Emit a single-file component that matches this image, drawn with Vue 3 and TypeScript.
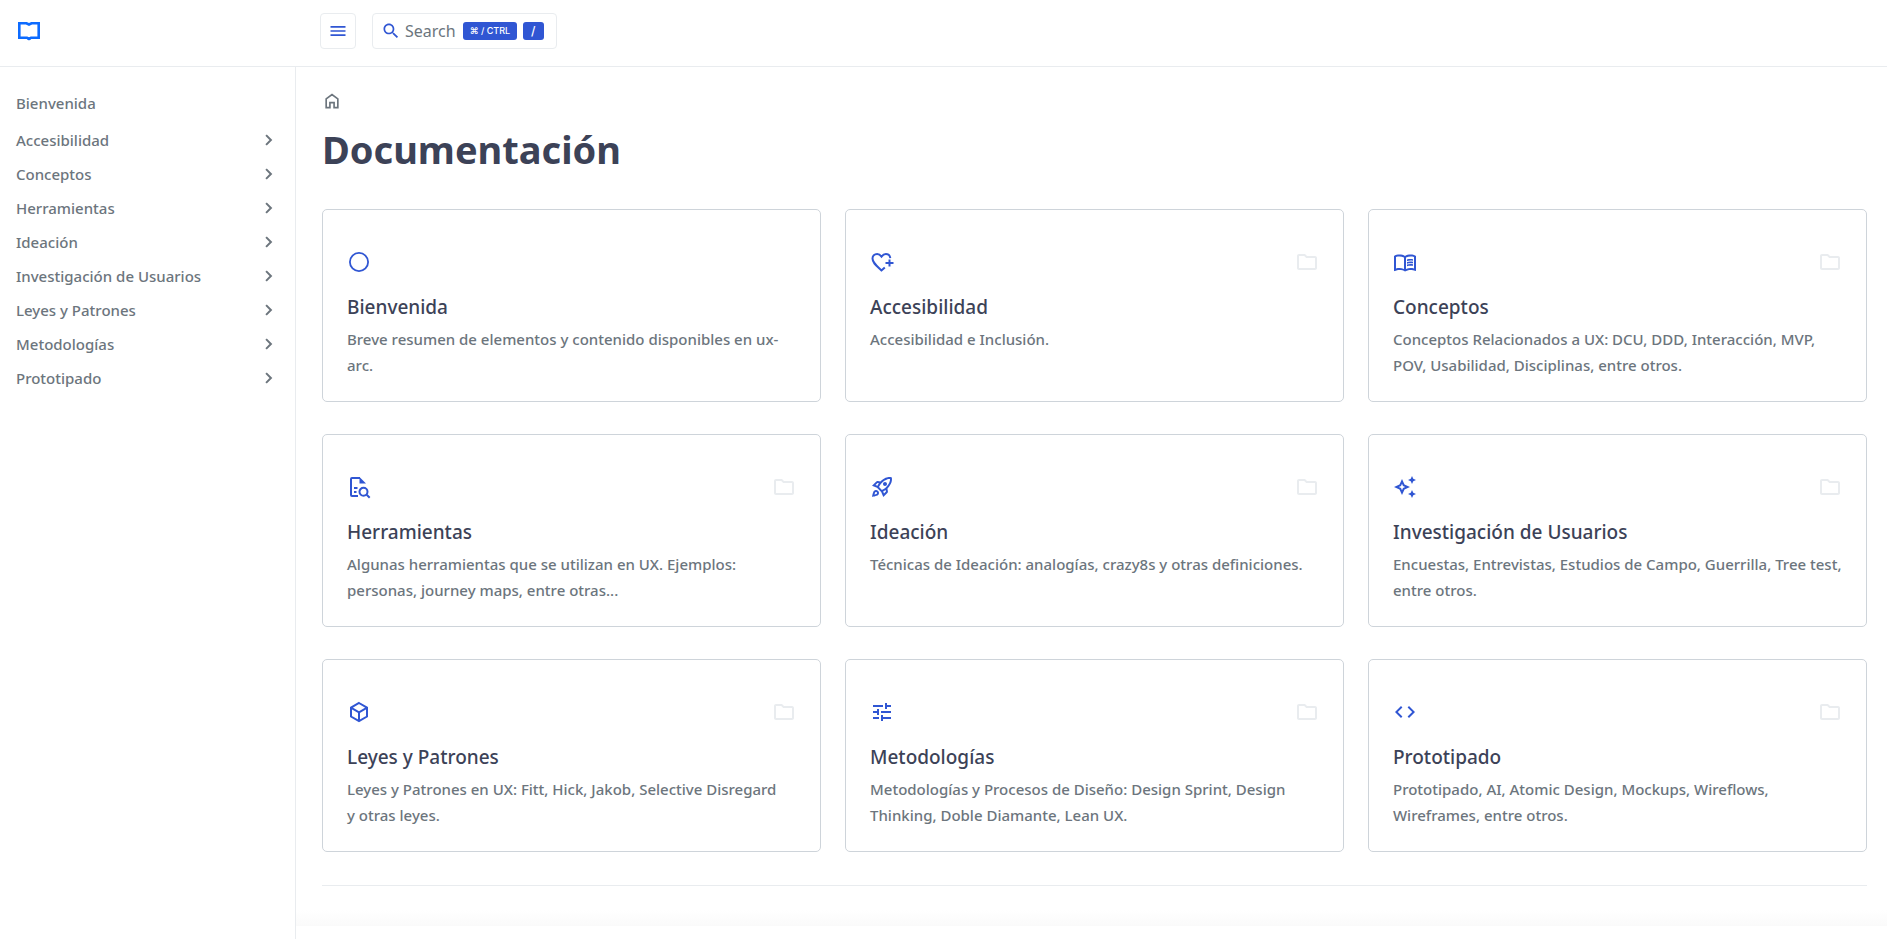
<script setup lang="ts">
import { ref } from 'vue'

interface Section {
  title: string
  text: string
  icon: string
  folder: boolean
}

const sidebarOpen = ref(true)

const sections: Section[] = [
  { title: 'Bienvenida', text: 'Breve resumen de elementos y contenido disponibles en ux-arc.', icon: 'circle', folder: false },
  { title: 'Accesibilidad', text: 'Accesibilidad e Inclusión.', icon: 'heart', folder: true },
  { title: 'Conceptos', text: 'Conceptos Relacionados a UX: DCU, DDD, Interacción, MVP, POV, Usabilidad, Disciplinas, entre otros.', icon: 'book', folder: true },
  { title: 'Herramientas', text: 'Algunas herramientas que se utilizan en UX. Ejemplos: personas, journey maps, entre otras...', icon: 'docSearch', folder: true },
  { title: 'Ideación', text: 'Técnicas de Ideación: analogías, crazy8s y otras definiciones.', icon: 'rocket', folder: true },
  { title: 'Investigación de Usuarios', text: 'Encuestas, Entrevistas, Estudios de Campo, Guerrilla, Tree test, entre otros.', icon: 'sparkle', folder: true },
  { title: 'Leyes y Patrones', text: 'Leyes y Patrones en UX: Fitt, Hick, Jakob, Selective Disregard y\u00a0otras leyes.', icon: 'cube', folder: true },
  { title: 'Metodologías', text: 'Metodologías y Procesos de Diseño: Design Sprint, Design Thinking, Doble Diamante, Lean UX.', icon: 'tune', folder: true },
  { title: 'Prototipado', text: 'Prototipado, AI, Atomic Design, Mockups, Wireflows, Wireframes, entre otros.', icon: 'code', folder: true },
]

const filled: Record<string, string> = {
  circle: 'M12 2a10 10 0 1 0 0 20a10 10 0 0 0 0-20zm0 18.200a8.200 8.200 0 1 1 0-16.400a8.200 8.200 0 0 1 0 16.400z',
  book: 'M21 5c-1.110-.350-2.330-.500-3.500-.500-1.950 0-4.050.400-5.500 1.500-1.450-1.100-3.550-1.500-5.500-1.500S2.450 4.900 1 6v14.650c0 .250.250.500.500.500.100 0 .150-.050.250-.050C3.100 20.450 5.050 20 6.500 20c1.950 0 4.050.400 5.500 1.500 1.350-.850 3.800-1.500 5.500-1.500 1.650 0 3.350.300 4.750 1.050.100.050.150.050.250.050.250 0 .500-.250.500-.500V6c-.600-.450-1.250-.750-2-1zM3 18.500V7c1.100-.350 2.300-.500 3.500-.500 1.340 0 3.130.410 4.500.990v11.500C9.630 18.410 7.840 18 6.500 18c-1.200 0-2.400.150-3.500.500zm18 0c-1.100-.350-2.300-.500-3.500-.500-1.340 0-3.130.410-4.500.990V7.490c1.370-.590 3.160-.990 4.500-.990 1.200 0 2.400.150 3.500.500v11.500zM17.500 10.500c.880 0 1.730.090 2.500.260V9.240c-.790-.150-1.640-.240-2.500-.240-1.280 0-2.460.160-3.500.470v1.570c.990-.350 2.180-.540 3.500-.540zm0 2.660c-1.280 0-2.460.160-3.500.470v-1.570c.990-.360 2.180-.540 3.500-.540.880 0 1.730.090 2.500.260v1.520c-.790-.150-1.640-.140-2.500-.140zm0 2.500c-1.280 0-2.460.160-3.500.470v-1.570c.990-.360 2.180-.540 3.500-.540.880 0 1.730.090 2.500.260v1.520c-.790-.150-1.640-.140-2.500-.140z',
  rocket: 'M6 15c-.83 0-1.58.34-2.120.88C2.700 17.060 2 22 2 22s4.940-.700 6.120-1.880C8.660 19.580 9 18.830 9 18c0-1.660-1.340-3-3-3zm.710 3.710c-.280.280-2.170.760-2.170.760s.470-1.880.760-2.170c.170-.190.420-.300.700-.300.550 0 1 .450 1 1 0 .280-.110.530-.290.710zM17.420 13.650c6.360-6.360 4.240-11.310 4.240-11.310s-4.950-2.120-11.310 4.240l-2.490-.500c-.650-.130-1.330.080-1.810.550L2 10.690l5 2.140L11.170 17l2.140 5 4.050-4.050c.470-.470.680-1.150.550-1.810l-.490-2.490zM7.410 10.830l-1.910-.820 1.970-1.970 1.440.290c-.570.830-1.080 1.700-1.500 2.500zm6.580 7.670l-.820-1.910c.800-.420 1.670-.930 2.490-1.500l.290 1.440-1.960 1.970zM16 12.240c-1.320 1.320-3.380 2.400-4.040 2.730l-2.930-2.930c.320-.650 1.400-2.710 2.730-4.040 4.680-4.680 8.230-3.990 8.230-3.990s.690 3.550-3.990 8.230zM15 11c1.100 0 2-.900 2-2s-.900-2-2-2-2 .900-2 2 .900 2 2 2z',
  sparkle: 'M19 9l1.250-2.750L23 5l-2.750-1.250L19 1l-1.250 2.750L15 5l2.750 1.250L19 9zm0 6l-1.250 2.750L15 19l2.750 1.250L19 23l1.250-2.750L23 19l-2.750-1.250L19 15zm-7.500-5.500L9 4 6.500 9.500 1 12l5.500 2.500L9 20l2.500-5.500L17 12l-5.500-2.500zm-1.510 3.490L9 15.170l-.990-2.180L5.830 12l2.180-.990L9 8.830l.990 2.180 2.180.990-2.180.990z',
  tune: 'M3 17v2h6v-2H3zM3 5v2h10V5H3zm10 16v-2h8v-2h-8v-2h-2v6h2zM7 9v2H3v2h4v2h2V9H7zm14 4v-2H11v2h10zm-6-4h2V7h4V5h-4V3h-2v6z',
  code: 'M9.400 16.600L4.800 12l4.600-4.600L8 6l-6 6 6 6 1.400-1.400zm5.200 0l4.600-4.600-4.600-4.600L16 6l6 6-6 6-1.400-1.400z',
}

const stroked: Record<string, string> = {
  heart: 'M20.300 8.200C20 5.600 18.100 4 15.900 4c-1.800 0-3.200 1-4.400 2.600C10.300 5 8.900 4 7.100 4 4.500 4 2.500 6 2.500 8.600c0 4 3.700 6.900 9 11.900l3.300-3.100M19.500 9.500v7M15.500 13h8',
  docSearch: 'M11 21H5a1 1 0 0 1-1-1V4a1 1 0 0 1 1-1H13M7 13h3.500M7 17h2.500M19.700 19.700l3 3M16.500 12.800a4 4 0 1 0 0 8a4 4 0 0 0 0-8z',
  cube: 'M12 3l8 4.600v8.900L12 21l-8-4.500V7.600zM4.300 7.900L12 12.300l7.700-4.400M12 12.300V21',
}
</script>

<template>
  <div class="page">
    <header class="topbar">
      <a class="brand" href="#" aria-label="Inicio">
        <svg width="24" height="24" viewBox="0 0 24 24" fill="none" stroke="#0d6bff" stroke-width="2.600" aria-hidden="true">
          <path d="M2.300 4.300H9.500L12 5.500l2.500-1.200h7.200v14.400H14L12 20l-2-1.300H2.300z" />
          <path d="M10.500 19.500h3" />
        </svg>
      </a>
      <div class="tools">
        <button class="menu" type="button" aria-label="Menú" :aria-expanded="sidebarOpen" @click="sidebarOpen = !sidebarOpen">
          <svg width="20" height="20" viewBox="0 0 24 24" fill="currentColor" aria-hidden="true">
            <path d="M3 18h18v-2H3v2zm0-5h18v-2H3v2zm0-7v2h18V6H3z" />
          </svg>
        </button>
        <button class="search" type="button">
          <svg width="20" height="20" viewBox="0 0 24 24" fill="currentColor" aria-hidden="true">
            <path d="M15.500 14h-.790l-.280-.270C15.410 12.590 16 11.110 16 9.500 16 5.910 13.090 3 9.500 3S3 5.910 3 9.500 5.910 16 9.500 16c1.610 0 3.090-.590 4.230-1.570l.270.280v.790l5 4.990L20.490 19l-4.990-5zm-6 0C7.010 14 5 11.990 5 9.500S7.010 5 9.500 5 14 7.010 14 9.500 11.990 14 9.500 14z" />
          </svg>
          <span class="search-label">Search</span>
          <kbd>⌘ / CTRL</kbd>
          <kbd class="slash">/</kbd>
        </button>
      </div>
    </header>

    <div class="body">
      <nav v-show="sidebarOpen" class="sidebar" aria-label="Documentación">
        <a v-for="section in sections" :key="section.title" class="nav-item" :class="{ first: !section.folder }" href="#">
          <span>{{ section.title }}</span>
          <svg v-if="section.folder" width="20" height="20" viewBox="0 0 24 24" fill="none" stroke="currentColor" stroke-width="2.400" aria-hidden="true">
            <path d="M8.500 6.200l5.800 5.800-5.800 5.800" />
          </svg>
        </a>
      </nav>

      <main class="content">
        <a class="home" href="#" aria-label="Inicio">
          <svg width="20" height="20" viewBox="0 0 24 24" fill="none" stroke="currentColor" stroke-width="2" aria-hidden="true">
            <path d="M5 20V9.500l7-5.300 7 5.300V20h-4.500v-6h-5v6z" />
          </svg>
        </a>
        <h1>Documentación</h1>
        <div class="cards">
          <a v-for="section in sections" :key="section.title" class="card" href="#">
            <div class="card-icons">
              <svg width="24" height="24" viewBox="0 0 24 24" aria-hidden="true">
                <path v-if="filled[section.icon]" :d="filled[section.icon]" fill="currentColor" fill-rule="evenodd" />
                <path v-else :d="stroked[section.icon]" fill="none" stroke="currentColor" stroke-width="2" />
                <path v-if="section.icon === 'docSearch'" d="M12.500 2L19 8.500h-6.500z" fill="currentColor" />
              </svg>
              <svg v-if="section.folder" class="folder" width="24" height="24" viewBox="0 0 24 24" fill="currentColor" aria-hidden="true">
                <path d="M9.170 6l2 2H20v10H4V6h5.170M10 4H4c-1.100 0-1.990.900-1.990 2L2 18c0 1.100.900 2 2 2h16c1.100 0 2-.900 2-2V8c0-1.100-.900-2-2-2h-8l-2-2z" />
              </svg>
            </div>
            <h2>{{ section.title }}</h2>
            <p>{{ section.text }}</p>
          </a>
        </div>
        <hr />
        <footer class="fade"></footer>
      </main>
    </div>
  </div>
</template>

<style>
body {
  margin: 0;
  background: #fff;
}
</style>

<style scoped>
.page {
  display: flex;
  flex-direction: column;
  min-height: 100vh;
  font-family: "Segoe UI", "Noto Sans", sans-serif;
  font-size: 15px;
  color: #6c757d;
}
.page * {
  box-sizing: border-box;
}
a {
  color: inherit;
  text-decoration: none;
}
svg {
  display: block;
  flex: none;
}
.topbar {
  display: flex;
  border-bottom: 1px solid #e9ecef;
  padding: 13px 0 17px;
}
.brand {
  display: flex;
  align-items: center;
  width: 320px;
  padding: 0 17px;
}
.tools {
  display: flex;
  gap: 16px;
}
.menu,
.search {
  display: flex;
  align-items: center;
  height: 36px;
  border: 1px solid #e9ecef;
  border-radius: 4px;
  background: #fff;
  color: #3056d3;
  font: inherit;
}
.menu {
  justify-content: center;
  width: 36px;
  padding: 0;
}
.search {
  padding: 0 12px 0 8px;
}
.search-label {
  margin: 0 7px 0 4px;
  color: #6c757d;
  font-size: 16px;
}
kbd {
  height: 18px;
  margin-right: 6px;
  padding: 0 7px;
  border-radius: 3px;
  background: #3056d3;
  color: #fff;
  font: 500 9px/18px Inter, "Noto Sans", "DejaVu Sans", sans-serif;
}
kbd.slash {
  margin-right: 0;
  padding: 0 8px;
  font-size: 12px;
}
.body {
  display: flex;
  flex: 1;
}
.sidebar {
  flex: none;
  width: 296px;
  padding: 19px 16px 0;
  border-right: 1px solid #e9ecef;
}
.nav-item {
  display: flex;
  align-items: center;
  justify-content: space-between;
  height: 34px;
  font-weight: 500;
}
.nav-item.first {
  margin-bottom: 3px;
}
.content {
  flex: 1;
  min-width: 0;
  padding: 24px 20px 0 26px;
}
.home {
  display: block;
  width: 20px;
}
h1 {
  margin: 8px 0 30px;
  color: #3c4257;
  font-size: 38px;
  font-weight: 700;
  line-height: 60px;
}
.cards {
  display: grid;
  grid-template-columns: repeat(3, minmax(0, 1fr));
  gap: 32px 24px;
}
.card {
  padding: 40px 24px 23px;
  border: 1px solid #ced4da;
  border-radius: 5px;
}
.card-icons {
  display: flex;
  justify-content: space-between;
  color: #3056d3;
}
.folder {
  color: #e9ecef;
}
h2 {
  margin: 18px 0 4px;
  color: #3c4257;
  font-size: 19px;
  font-weight: 500;
  line-height: 30px;
}
p {
  min-height: 52px;
  margin: 0;
  font-weight: 500;
  line-height: 26px;
}
hr {
  margin: 33px 0 0;
  border: 0;
  border-top: 1px solid #e9ecef;
}
.fade {
  height: 16px;
  margin: 24px -20px 0 -26px;
  background: linear-gradient(#fff, #fafafa);
}
</style>
